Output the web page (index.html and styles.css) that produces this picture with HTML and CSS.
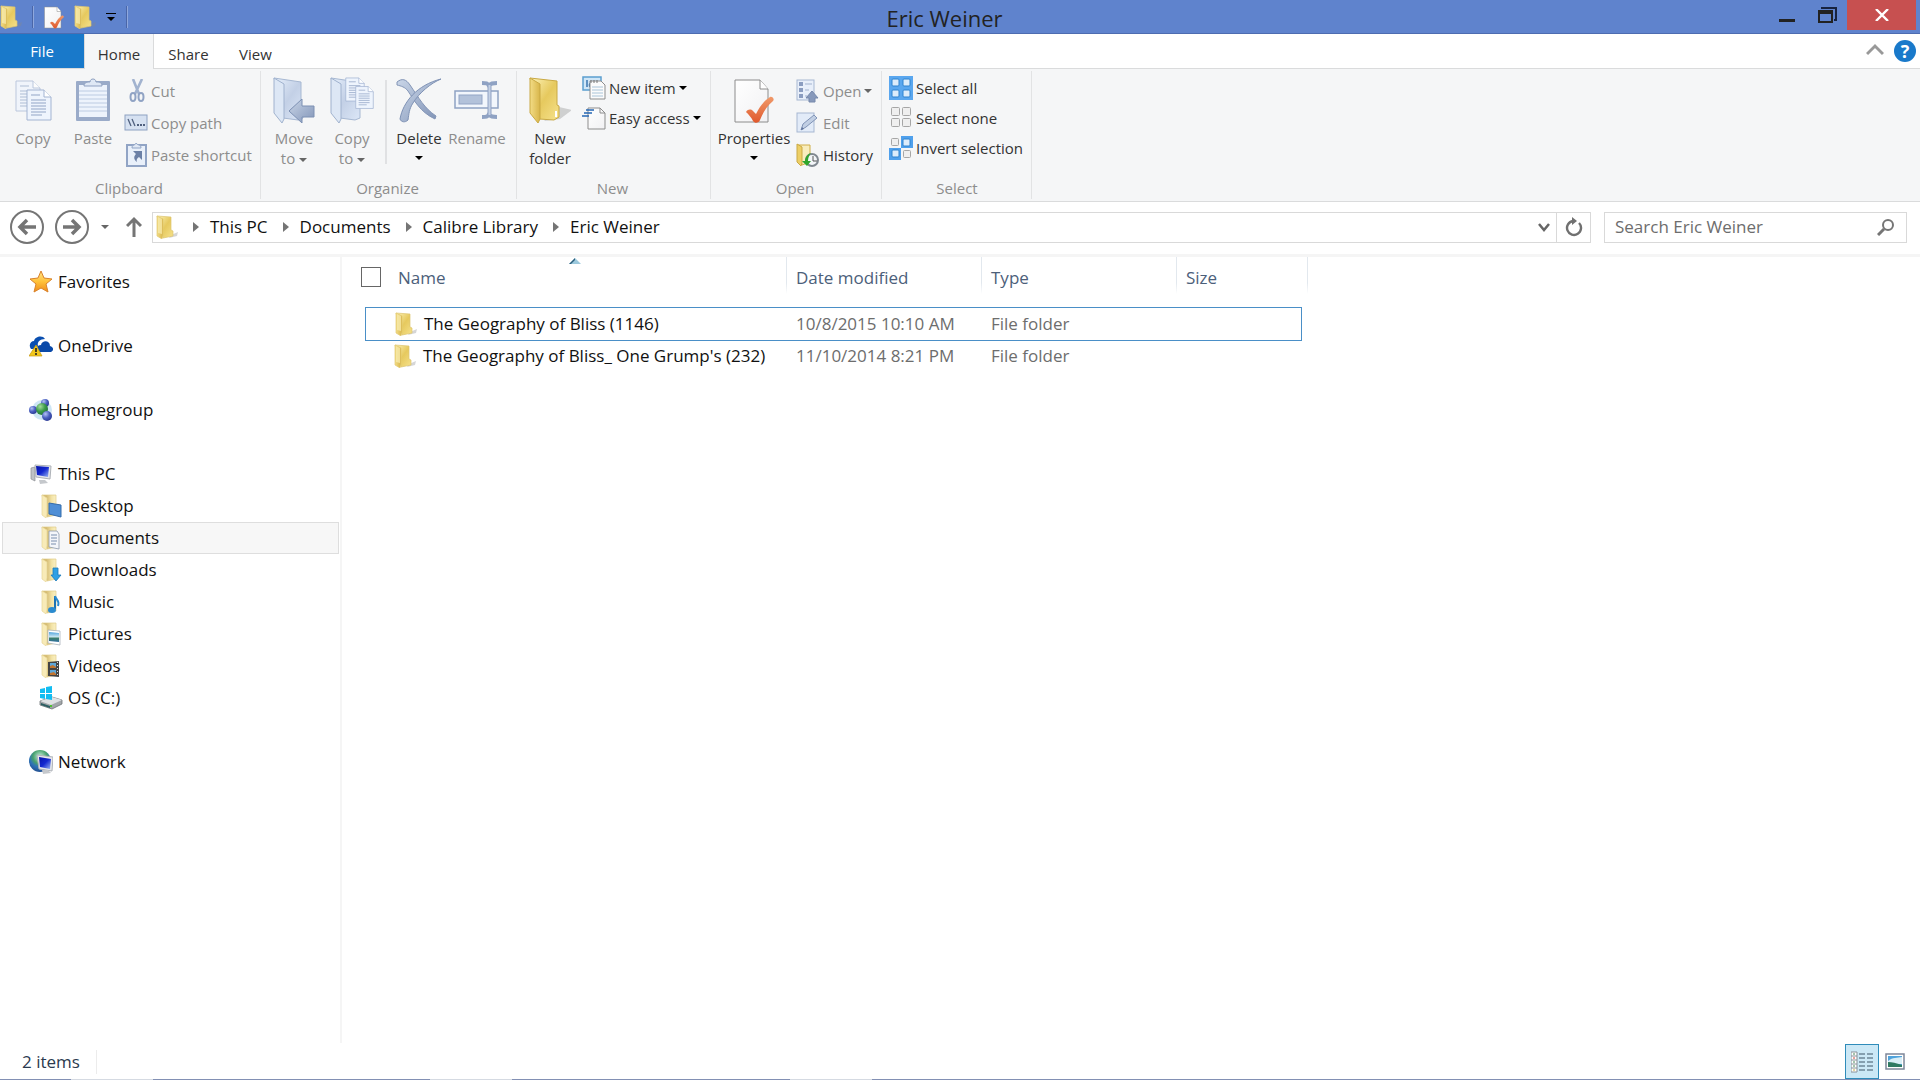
FILE: index.html
```
<!DOCTYPE html>
<html lang="en">
<head>
<meta charset="UTF-8">
<meta name="viewport" content="width=device-width, initial-scale=1.0">
<title>Eric Weiner</title>
<link rel="stylesheet" href="styles.css">
</head>
<body>
  <!-- shared icon shapes -->
  <svg class="defs" width="0" height="0" aria-hidden="true">
    <defs>
      <linearGradient id="gold" x1="0" x2="1" y1="0" y2="1">
        <stop offset="0" stop-color="#fdf3b8"/><stop offset="0.5" stop-color="#e6c95e"/><stop offset="1" stop-color="#f6e28c"/>
      </linearGradient>
      <linearGradient id="goldFlap" x1="0" x2="1">
        <stop offset="0" stop-color="#f3dc86"/><stop offset="1" stop-color="#d8b64a"/>
      </linearGradient>
      <linearGradient id="pale" x1="0" x2="1">
        <stop offset="0.3" stop-color="#d3b970"/><stop offset="0.7" stop-color="#f3e4a8"/><stop offset="1" stop-color="#faf0c4"/>
      </linearGradient>
      <linearGradient id="ice" x1="0" x2="1" y1="0" y2="1">
        <stop offset="0" stop-color="#e6effb"/><stop offset="0.5" stop-color="#c3d0e6"/><stop offset="1" stop-color="#dce7f7"/>
      </linearGradient>
      <linearGradient id="steel" x1="0" x2="1" y1="0" y2="1">
        <stop offset="0" stop-color="#cad6e8"/><stop offset="1" stop-color="#8295b8"/>
      </linearGradient>
      <linearGradient id="sheet" x1="0" x2="1" y1="0" y2="1">
        <stop offset="0" stop-color="#ffffff"/><stop offset="1" stop-color="#f1f1f3"/>
      </linearGradient>
      <linearGradient id="tick" x1="0" x2="0" y1="0" y2="1">
        <stop offset="0" stop-color="#f09a6a"/><stop offset="1" stop-color="#e0582c"/>
      </linearGradient>
      <linearGradient id="screen" x1="0" x2="1" y1="0" y2="1">
        <stop offset="0" stop-color="#0614a8"/><stop offset="0.5" stop-color="#1428d0"/><stop offset="1" stop-color="#9db8f2"/>
      </linearGradient>
      <linearGradient id="photo" x1="0" x2="0" y1="0" y2="1">
        <stop offset="0" stop-color="#4fa3dc"/><stop offset="0.5" stop-color="#cfe8f2"/><stop offset="0.6" stop-color="#3d7f68"/><stop offset="1" stop-color="#2f6fa3"/>
      </linearGradient>
      <radialGradient id="ballBlue" cx="0.35" cy="0.3" r="0.8">
        <stop offset="0" stop-color="#b4c3f4"/><stop offset="0.5" stop-color="#4a5fc0"/><stop offset="1" stop-color="#26348c"/>
      </radialGradient>
      <radialGradient id="ballGreen" cx="0.35" cy="0.3" r="0.8">
        <stop offset="0" stop-color="#a5dc9d"/><stop offset="0.5" stop-color="#3c9b4a"/><stop offset="1" stop-color="#1c6b34"/>
      </radialGradient>
      <radialGradient id="globe" cx="0.5" cy="0.3" r="0.8">
        <stop offset="0" stop-color="#c6f0dc"/><stop offset="0.4" stop-color="#47a06c"/><stop offset="0.6" stop-color="#2f73b8"/><stop offset="1" stop-color="#1d4180"/>
      </radialGradient>
      <linearGradient id="star" x1="0" x2="0" y1="0" y2="1">
        <stop offset="0" stop-color="#ffe48a"/><stop offset="0.5" stop-color="#ffc23a"/><stop offset="1" stop-color="#f08c1a"/>
      </linearGradient>

      <symbol id="i-folder" viewBox="0 0 22 24">
        <path d="M15 20l7-3-1 4-8 2z" fill="#8a8a8a" opacity="0.35"/>
        <path d="M1 1l14 1v13l2 1v5l-10 2z" fill="url(#gold)" stroke="#dcc470" stroke-width="0.7"/>
        <path d="M1 1l6 3v16l-1 4-5-3z" fill="url(#goldFlap)" stroke="#e2ca74" stroke-width="0.7"/>
        <path d="M2 2l4 2v15l-4-1z" fill="#faeeb4" opacity="0.7"/>
      </symbol>
      <symbol id="i-folder-pale" viewBox="0 0 22 24">
        <path d="M1 1h14v20l-9 2z" fill="url(#pale)" stroke="#dfcc88" stroke-width="0.7"/>
        <path d="M1 1l5 3v16l-1 4-4-3z" fill="#f8ebb8" stroke="#e6d596" stroke-width="0.7"/>
      </symbol>
      <symbol id="i-openfolder" viewBox="0 0 44 46">
        <path d="M30 30l13 3-12 9-16 2z" fill="#777" opacity="0.3"/>
        <path d="M1 1l27 3v24l2 1v11l-5 3-15-1z" fill="url(#gold)" stroke="#c9a944"/>
        <path d="M1 1l10 6v35l-2 4-8-10z" fill="url(#goldFlap)" stroke="#c9a944"/>
        <path d="M27 34v6" stroke="#fff" stroke-width="2"/>
      </symbol>
      <symbol id="i-icefolder" viewBox="0 0 44 46">
        <path d="M1 1l27 4v24l2 1v11l-5 2-15-2z" fill="url(#ice)" stroke="#a7b8d2"/>
        <path d="M1 1l10 6v35l-2 4-8-10z" fill="#dde7f5" stroke="#a0b2ce"/>
      </symbol>
      <symbol id="i-page" viewBox="0 0 26 32">
        <path d="M1 1h17l7 7v23h-24z" fill="#eef4fd" stroke="#a3b4d2"/>
        <path d="M18 1v7h7" fill="#fff" stroke="#a3b4d2"/>
        <path d="M5 6h9M5 11h15M5 14h15M5 17h15M5 20h15M5 23h15M5 26h11" stroke="#92a5c6" stroke-width="1"/>
      </symbol>
      <symbol id="i-checkpage" viewBox="0 0 40 46">
        <path d="M1 3h25l8 9v33h-33z" fill="url(#sheet)" stroke="#8c8c8c"/>
        <path d="M26 3v9h8" fill="#fff" stroke="#8c8c8c"/>
        <path d="M12 35c2-3 5-3 7-1l3 3c4-8 9-14 14-17 2-1 5 2 3 4-7 6-10 12-13 19-1 3-5 4-7 1-2-4-4-6-7-9z" fill="url(#tick)"/>
      </symbol>
    </defs>
  </svg>

  <header class="titlebar">
    <div class="quick">
      <svg width="22" height="24"><use href="#i-folder"/></svg>
      <span class="bar"></span>
      <button aria-label="Properties"><svg width="20" height="24"><use href="#i-checkpage"/></svg></button>
      <button aria-label="New folder"><svg width="22" height="24"><use href="#i-folder"/></svg></button>
      <button aria-label="Customize Quick Access Toolbar"><svg width="10" height="10" viewBox="0 0 10 10"><path d="M0 1h10v1h-10zM1 5h8l-4 4z" fill="#000"/></svg></button>
      <span class="bar"></span>
    </div>
    <h1>Eric Weiner</h1>
    <div class="controls">
      <button aria-label="Minimize"><svg width="16" height="18" viewBox="0 0 16 18"><path d="M0 13h16v3h-16z" fill="#222"/></svg></button>
      <button aria-label="Restore"><svg width="19" height="17" viewBox="0 0 19 17"><path d="M3 1h15v12h-2" fill="none" stroke="#17233f" stroke-width="2"/><path d="M1 4h13v11h-13z" fill="none" stroke="#222" stroke-width="2"/><path d="M0 3h15v4h-15z" fill="#222"/></svg></button>
      <button class="close" aria-label="Close"><svg width="14" height="12" viewBox="0 0 14 12"><path d="M1 0l12 12M13 0l-12 12" stroke="#fff" stroke-width="2.4"/></svg></button>
    </div>
  </header>

  <nav class="tabs">
    <button class="file">File</button>
    <button class="active">Home</button>
    <button>Share</button>
    <button>View</button>
    <div class="tabs-right">
      <button aria-label="Minimize the Ribbon"><svg width="18" height="14" viewBox="0 0 18 14"><path d="M1 11l8-8 8 8" fill="none" stroke="#999" stroke-width="3"/></svg></button>
      <button class="help" aria-label="Help">?</button>
    </div>
  </nav>

  <section class="ribbon">
    <div class="group clipboard">
      <div class="items">
        <button class="big off"><svg width="38" height="46" viewBox="0 0 38 46"><g transform="translate(1,3)"><use href="#i-page" width="26" height="32" opacity="0.7"/><use href="#i-page" x="11" y="9" width="26" height="32"/></g></svg>Copy</button>
        <button class="big off"><svg width="36" height="46" viewBox="0 0 36 46"><rect x="1" y="4" width="34" height="40" rx="1" fill="#9aabc9"/><rect x="4" y="8" width="28" height="32" fill="#edf3fc"/><path d="M4 14h28M4 18h28M4 22h28M4 26h28M4 30h28M4 34h28" stroke="#bccbe2"/><path d="M9 9c0-4 4-4 6-4 0-4 6-4 6 0 3 0 6 0 6 4z" fill="#dfe8f5" stroke="#8fa1c1"/></svg>Paste</button>
        <div class="stack">
          <button class="off"><svg width="24" height="24" viewBox="0 0 24 24"><path d="M9 0l6 15M18 0l-7 15" stroke="#a2b3cf" stroke-width="2.6"/><ellipse cx="9" cy="18" rx="2.500" ry="4" fill="none" stroke="#90a3c4" stroke-width="2"/><ellipse cx="17" cy="18" rx="2.500" ry="4" fill="none" stroke="#90a3c4" stroke-width="2"/></svg>Cut</button>
          <button class="off"><svg width="24" height="24" viewBox="0 0 24 24"><rect x="1" y="4" width="22" height="15" fill="#d6e1f1" stroke="#8ea1c2"/><path d="M4 8l3 7M8 8l3 7" stroke="#50607e" stroke-width="1.3"/><path d="M13 14h2M16 14h2M19 14h2" stroke="#50607e" stroke-width="2"/></svg>Copy path</button>
          <button class="off"><svg width="24" height="24" viewBox="0 0 24 24"><rect x="3" y="2" width="19" height="21" fill="#e9f0fa" stroke="#91a4c5" stroke-width="2"/><path d="M8 5c0-4 3-2 4-5 2 3 5 1 5 5z" fill="#e0e8f4" stroke="#91a4c5"/><path d="M9 8h9v9l-3-3c-2 1-3 3-2 5-4-3-3-6-1-8z" fill="#6b80a6"/></svg>Paste shortcut</button>
        </div>
      </div>
      <div class="caption">Clipboard</div>
    </div>

    <div class="group organize">
      <div class="items">
        <button class="big off"><svg width="42" height="46" viewBox="0 0 42 46"><use href="#i-icefolder" width="44" height="46"/><path d="M16 34l13-12v7h12v11h-12v6z" fill="url(#steel)" stroke="#7d90b3"/></svg>Move<br>to <i class="caret"></i></button>
        <button class="big off"><svg width="44" height="46" viewBox="0 0 44 46"><use href="#i-icefolder" width="44" height="46"/><use href="#i-page" x="15" y="0" width="20" height="25"/><use href="#i-page" x="25" y="8" width="19" height="25"/></svg>Copy<br>to <i class="caret"></i></button>
        <span class="divider"></span>
        <button class="big"><svg width="48" height="46" viewBox="0 0 48 46"><path d="M2 5c5-4 9-3 13 3 9 13 14 23 26 31l-1 3c-15-7-21-19-27-28-3-4-7-5-11-6z" fill="url(#steel)" stroke="#8496b7"/><path d="M46 2c-10 4-22 14-28 24-4 6-4 11-5 17-3 3-7 2-8-1 3-17 17-34 41-40z" fill="url(#steel)" stroke="#7f92b5"/></svg>Delete<i class="caret below"></i></button>
        <button class="big off"><svg width="46" height="46" viewBox="0 0 46 46"><rect x="1" y="14" width="43" height="17" fill="#f2f6fc" stroke="#8fa2c3" stroke-width="1.5"/><rect x="5" y="18" width="23" height="9" fill="#b3c2da" stroke="#93a5c5"/><path d="M28 6c4 0 6 0 7 3 1-3 4-3 8-3M28 40c4 0 6 0 7-3 1 3 4 3 8 3M35.500 9v28" fill="none" stroke="#8fa2c3" stroke-width="4"/><path d="M35.500 8v30" stroke="#c4d1e5" stroke-width="2"/></svg>Rename</button>
      </div>
      <div class="caption">Organize</div>
    </div>

    <div class="group new">
      <div class="items">
        <button class="big"><svg width="42" height="46" viewBox="0 0 42 46"><use href="#i-openfolder" width="44" height="46"/></svg>New<br>folder</button>
        <div class="stack tight">
          <button><svg width="24" height="24" viewBox="0 0 24 24"><rect x="1" y="1" width="18" height="13" fill="#cfe6f7" stroke="#5b9fd0" stroke-width="1.500"/><path d="M5 4v7M8 11c-2-4 3-6 4-3" stroke="#3a76b0" fill="none" stroke-width="1.500"/><path d="M8 5h11l4 4v14h-15z" fill="#fbfbfb" stroke="#8d8d8d"/><path d="M10 11h11M10 14h11M10 17h11M10 20h11" stroke="#a9c4d8"/><path d="M9 4v3M12 4v3M15 4v3" stroke="#777"/></svg>New item <i class="caret"></i></button>
          <button><svg width="24" height="24" viewBox="0 0 24 24"><path d="M6 2h12l5 5v16h-17z" fill="url(#sheet)" stroke="#8d8d8d"/><path d="M18 2v5h5" fill="none" stroke="#8d8d8d"/><path d="M4 4h8M2 7h8M0 10h7" stroke="#2667b4" stroke-width="1.500"/></svg>Easy access <i class="caret"></i></button>
        </div>
      </div>
      <div class="caption">New</div>
    </div>

    <div class="group open">
      <div class="items">
        <button class="big"><svg width="40" height="46"><use href="#i-checkpage"/></svg>Properties<i class="caret below"></i></button>
        <div class="stack">
          <button class="off"><svg width="24" height="24" viewBox="0 0 24 24"><rect x="1" y="1" width="17" height="20" fill="#e8effa" stroke="#a7b7d2"/><path d="M3 3h4v4h-4zM3 9h4v4h-4zM3 15h4v4h-4z" fill="#8b9dc0"/><path d="M9 5h7M9 11h4M9 17h2" stroke="#a3b3cf"/><path d="M10 19l6-7 6 7h-3v4h-6v-4z" fill="#8799bb" stroke="#7688ab"/></svg>Open <i class="caret"></i></button>
          <button class="off"><svg width="24" height="24" viewBox="0 0 24 24"><rect x="1" y="2" width="17" height="19" fill="#e2ebf8" stroke="#a7b7d2"/><path d="M5 19l2-6 11-9 3 3-11 9z" fill="#c1cfe4" stroke="#8093b6"/><path d="M5 19l3-1-2-2z" fill="#60749c"/></svg>Edit</button>
          <button><svg width="24" height="24" viewBox="0 0 24 24"><path d="M2 2h12v17l-8 3z" fill="#f8edbd" stroke="#d0ae46"/><path d="M1 1l5 3v16l-1 3-4-4z" fill="#edcf66" stroke="#c9a944"/><circle cx="16" cy="17" r="6" fill="#f2f5f8" stroke="#808890" stroke-width="2"/><path d="M17 13v5h4" fill="none" stroke="#555"/><path d="M15 10c-3 1-6 4-6 8h-3l5 5 4-5h-3c0-3 1-6 3-8z" fill="#2fa52c"/></svg>History</button>
        </div>
      </div>
      <div class="caption">Open</div>
    </div>

    <div class="group select">
      <div class="items">
        <div class="stack tight">
          <button><svg width="24" height="24" viewBox="0 0 24 24"><rect width="24" height="24" fill="#5aa7ef"/><g fill="#dcecfb" stroke="#2f83cf"><rect x="3" y="3" width="7" height="7" rx="1"/><rect x="14" y="3" width="7" height="7" rx="1"/><rect x="3" y="14" width="7" height="7" rx="1"/><rect x="14" y="14" width="7" height="7" rx="1"/></g></svg>Select all</button>
          <button><svg width="24" height="24" viewBox="0 0 24 24"><g fill="#efefef" stroke="#a6a6a6"><rect x="2.500" y="1.500" width="8" height="8" rx="1"/><rect x="13.500" y="1.500" width="8" height="8" rx="1"/><rect x="2.500" y="12.500" width="8" height="8" rx="1"/><rect x="13.500" y="12.500" width="8" height="8" rx="1"/></g></svg>Select none</button>
          <button><svg width="24" height="24" viewBox="0 0 24 24"><path d="M12 0h12v12h-12zM0 12h12v12h-12z" fill="#4fa0ec"/><g fill="#dcecfb" stroke="#2f83cf"><rect x="14" y="3" width="7" height="7" rx="1"/><rect x="3" y="14" width="7" height="7" rx="1"/></g><g fill="#efefef" stroke="#a6a6a6"><rect x="2.500" y="2.500" width="7" height="7" rx="1"/><rect x="14.500" y="14.500" width="7" height="7" rx="1"/></g></svg>Invert selection</button>
        </div>
      </div>
      <div class="caption">Select</div>
    </div>
  </section>

  <div class="address-row">
    <button aria-label="Back"><svg width="34" height="34" viewBox="0 0 34 34"><circle cx="17" cy="17" r="16" fill="none" stroke="#757575" stroke-width="2"/><path d="M26 17h-16M17 10l-7 7 7 7" fill="none" stroke="#757575" stroke-width="3.500"/></svg></button>
    <button aria-label="Forward"><svg width="34" height="34" viewBox="0 0 34 34"><circle cx="17" cy="17" r="16" fill="none" stroke="#757575" stroke-width="2"/><path d="M8 17h16M17 10l7 7-7 7" fill="none" stroke="#757575" stroke-width="3.500"/></svg></button>
    <button class="recent" aria-label="Recent locations"><i class="caret"></i></button>
    <button aria-label="Up"><svg width="16" height="22" viewBox="0 0 16 22"><path d="M8 21v-18M1 10l7-7 7 7" fill="none" stroke="#757575" stroke-width="3"/></svg></button>
    <div class="address">
      <svg width="22" height="24"><use href="#i-folder"/></svg>
      <i class="sep"></i><a href="#">This PC</a>
      <i class="sep"></i><a href="#">Documents</a>
      <i class="sep"></i><a href="#">Calibre Library</a>
      <i class="sep"></i><a href="#">Eric Weiner</a>
      <button class="drop" aria-label="Previous locations"><svg width="14" height="10" viewBox="0 0 14 10"><path d="M2 1l5 6 5-6" fill="none" stroke="#666" stroke-width="2.500"/></svg></button>
      <button class="refresh" aria-label="Refresh"><svg width="18" height="20" viewBox="0 0 18 20"><path d="M14 6a7 7 0 1 1-6-2" fill="none" stroke="#707070" stroke-width="2.400"/><path d="M7 0l5 4-5 4z" fill="#707070"/></svg></button>
    </div>
    <label class="search">
      <input type="search" placeholder="Search Eric Weiner" aria-label="Search Eric Weiner">
      <svg width="18" height="18" viewBox="0 0 18 18"><circle cx="11" cy="7" r="5" fill="none" stroke="#757575" stroke-width="2"/><path d="M7 11l-6 6" stroke="#757575" stroke-width="3"/></svg>
    </label>
  </div>

  <main>
    <nav class="tree">
      <a href="#" class="root"><svg width="24" height="24" viewBox="0 0 24 24"><path d="M12 1l3 7 8 1-6 5 2 8-7-4-7 4 2-8-6-5 8-1z" fill="url(#star)" stroke="#d9822b"/></svg>Favorites</a>
      <a href="#" class="root"><svg width="24" height="24" viewBox="0 0 24 24"><path d="M2 15c-3-4 0-8 3-8 1-5 9-6 11-2-6 0-8 4-7 7l-2 3z" fill="#0a4fb0"/><path d="M9 17c-2-5 1-6 3-6 1-5 9-5 9 1 4 1 4 5 1 6h-11z" fill="#0a49a8"/><path d="M7 11l6 11h-13z" fill="#f2c71c" stroke="#c79a12" stroke-width="0.700"/><path d="M7 14v4M7 19v2" stroke="#222" stroke-width="1.600"/></svg>OneDrive</a>
      <a href="#" class="root"><svg width="24" height="24" viewBox="0 0 24 24"><circle cx="13" cy="12" r="10" fill="#c3e0f2" opacity="0.800"/><circle cx="16" cy="5" r="4" fill="url(#ballBlue)"/><circle cx="4" cy="12" r="4" fill="url(#ballBlue)"/><circle cx="13" cy="11" r="6" fill="url(#ballGreen)"/><circle cx="18" cy="18" r="5" fill="url(#ballBlue)"/></svg>Homegroup</a>
      <a href="#" class="root"><svg width="24" height="24" viewBox="0 0 24 24"><path d="M2 6l4-1v14l-4-2z" fill="#bfc2c6" stroke="#8c8f93" stroke-width="0.700"/><path d="M6 3l16 1-1 13-14-2z" fill="#e5e7ea" stroke="#aeb2b8"/><path d="M7 4l13 1-1 10-11-2z" fill="url(#screen)"/><path d="M10 18h6l3 3-8 1z" fill="#c5c8cc"/></svg>This PC</a>
      <ul>
        <li><a href="#"><svg width="22" height="24" viewBox="0 0 22 24"><use href="#i-folder-pale"/><path d="M8 9l12 2v12l-12-3z" fill="#4f8fd6" stroke="#356cab"/></svg>Desktop</a></li>
        <li><a href="#" class="current"><svg width="22" height="24" viewBox="0 0 22 24"><use href="#i-folder-pale"/><path d="M8 5l8 0 2 3v15l-10-2z" fill="#f4f6fa" stroke="#8d99ab" stroke-width="0.800"/><path d="M10 9h6M10 12h6M10 15h6M10 18h5" stroke="#7b8fae"/></svg>Documents</a></li>
        <li><a href="#"><svg width="22" height="24" viewBox="0 0 22 24"><use href="#i-folder-pale"/><path d="M12 10h5v7h3l-5 6-5-6h2z" fill="#2fa0e4" stroke="#1b79b9" stroke-width="0.800"/></svg>Downloads</a></li>
        <li><a href="#"><svg width="22" height="24" viewBox="0 0 22 24"><use href="#i-folder-pale"/><path d="M14 6v13" stroke="#1d73b4" stroke-width="2"/><ellipse cx="11" cy="20" rx="4" ry="3" fill="#2a8bd0"/><path d="M14 6c1 4 5 4 3 10" stroke="#2a8bd0" stroke-width="2" fill="none"/></svg>Music</a></li>
        <li><a href="#"><svg width="22" height="24" viewBox="0 0 22 24"><use href="#i-folder-pale"/><path d="M7 8l12 1v14l-12-2z" fill="#fff" stroke="#a9b2bb" stroke-width="0.800"/><path d="M8 10l10 1v9l-10-1z" fill="url(#photo)"/></svg>Pictures</a></li>
        <li><a href="#"><svg width="22" height="24" viewBox="0 0 22 24"><use href="#i-folder-pale"/><path d="M7 8l11-1v16l-11-1z" fill="#444"/><path d="M9 9h6v5h-6zM9 16h6v5h-6z" fill="#5fa6d6"/><path d="M9 12l3-1 3 2v1h-6zM9 19l4-1 2 2v1h-6z" fill="#c2752f"/><path d="M16.500 8v14" stroke="#ddd" stroke-dasharray="1 2"/></svg>Videos</a></li>
        <li><a href="#" class="drive"><svg width="24" height="24" viewBox="0 0 24 24"><path d="M1 15l12-4 10 3v4l-10 5-12-4z" fill="#a2a6a9" stroke="#6f7376" stroke-width="0.800"/><path d="M1 15l12-4 10 3-11 5z" fill="#e0e2e4"/><path d="M2 17l9 3v2l-9-3z" fill="#2c5f62"/><path d="M1 3l5-1v5h-5zM7 1l6-1v7h-6zM1 8h5v5l-5-1zM7 8h6v6l-6-1z" fill="#12bdf2"/><path d="M12 19v2" stroke="#4ec12f" stroke-width="2"/></svg>OS (C:)</a></li>
      </ul>
      <a href="#" class="root"><svg width="24" height="24" viewBox="0 0 24 24"><circle cx="11" cy="11" r="11" fill="url(#globe)"/><path d="M8 5l16 2-1 14-13-2z" fill="#e5e7ea" stroke="#aeb2b8"/><path d="M10 7l12 2-1 10-10-2z" fill="url(#screen)"/><path d="M13 20h6l3 3-8 1z" fill="#c5c8cc"/></svg>Network</a>
    </nav>

    <section class="files">
      <table>
        <colgroup><col class="c-edge"><col class="c-name"><col class="c-date"><col class="c-type"><col class="c-size"><col class="c-end"></colgroup>
        <thead>
          <tr>
            <th colspan="2" class="name"><div><input type="checkbox" id="all" aria-label="Select all items"><label for="all">Name</label></div><svg class="sort" width="12" height="6" viewBox="0 0 12 6"><path d="M0 6l6-6 6 6z" fill="#9cc9dd"/><path d="M0 6l6-6v2l-4 4z" fill="#2d5f7c"/></svg></th>
            <th>Date modified</th>
            <th>Type</th>
            <th colspan="2">Size</th>
          </tr>
        </thead>
        <tbody>
          <tr class="focused">
            <td></td>
            <td><div class="filename"><svg width="22" height="24"><use href="#i-folder"/></svg>The Geography of Bliss (1146)</div></td>
            <td>10/8/2015 10:10 AM</td>
            <td>File folder</td>
            <td></td>
            <td></td>
          </tr>
          <tr>
            <td></td>
            <td><div class="filename"><svg width="22" height="24"><use href="#i-folder"/></svg>The Geography of Bliss_ One Grump's (232)</div></td>
            <td>11/10/2014 8:21 PM</td>
            <td>File folder</td>
            <td></td>
            <td></td>
          </tr>
        </tbody>
      </table>
    </section>
  </main>

  <footer>
    <span class="count">2 items</span>
    <div class="views">
      <button class="on" aria-label="Details"><svg width="22" height="22" viewBox="0 0 22 22"><path d="M0 1h6v20h-6z" fill="#fff" stroke="#8a9299"/><path d="M0 5h6M0 9h6M0 13h6M0 17h6" stroke="#8a9299"/><path d="M2 7h2" stroke="#d0453a"/><path d="M2 3h2M2 11h2M2 15h2" stroke="#4a8a5a"/><path d="M2 19h2" stroke="#c9a944"/><path d="M8 3h6M16 3h6M8 7h6M16 7h6M8 11h6M16 11h6M8 15h6M16 15h6M8 19h6M16 19h6" stroke="#3e5669"/></svg></button>
      <button aria-label="Large icons"><svg width="20" height="17" viewBox="0 0 20 17"><rect x="1" y="1" width="18" height="15" fill="#fff" stroke="#7d8799" stroke-width="1.500"/><path d="M3 3h14v11h-14z" fill="#4fa3dc"/><path d="M3 8c5-4 9-3 14-4v7h-14z" fill="#d9eef6"/><path d="M3 9c4 0 8 1 14 3v2h-14z" fill="#2f7a62"/></svg></button>
    </div>
  </footer>
  <div class="taskbar-edge"><span></span><span></span><span></span></div>
</body>
</html>
```
FILE: styles.css
```
* {
  box-sizing: border-box;
}
body {
  margin: 0;
  min-height: 100vh;
  display: flex;
  flex-direction: column;
  background: #fff;
  color: #111;
  font-family: "Open Sans", "Noto Sans", sans-serif;
  font-size: 17px;
  line-height: 24px;
}
button {
  padding: 0;
  border: none;
  background: none;
  color: inherit;
  font: inherit;
}
a {
  color: inherit;
  text-decoration: none;
}
svg {
  flex: none;
}
.defs {
  position: absolute;
}

/* small triangles beside menu buttons */
.caret {
  display: inline-block;
  border: 4px solid transparent;
  border-top-color: #000;
  border-bottom: none;
  vertical-align: middle;
}
.off .caret,
.recent .caret {
  border-top-color: #666;
}

/* title bar */
.titlebar {
  display: flex;
  height: 34px;
  background: #5f83cd;
  border-bottom: 1px solid #4d6cb0;
}
.quick {
  display: flex;
  align-items: center;
  gap: 10px;
  width: 130px;
}
.quick button {
  display: flex;
}
.quick .bar {
  width: 2px;
  height: 22px;
  background: #8fa8dd;
  border-left: 1px solid #4a66a8;
}
.titlebar h1 {
  flex: 1;
  margin: 0 8px 0 0;
  text-align: center;
  font-size: 22px;
  font-weight: normal;
  line-height: 36px;
  color: #222;
}
.controls {
  display: flex;
  align-items: flex-start;
  padding-right: 4px;
}
.controls button {
  display: flex;
  align-items: center;
  justify-content: center;
  width: 40px;
  height: 30px;
}
.controls .close {
  width: 69px;
  background: #c75050;
}

/* ribbon tabs */
.tabs {
  display: flex;
  height: 35px;
  border-bottom: 1px solid #dadbdc;
  font-size: 15px;
  color: #333;
}
.tabs > button {
  width: 67px;
  padding: 6px 0 0 2px;
}
.tabs .file {
  width: 84px;
  padding: 0;
  background: #1979ca;
  color: #fff;
}
.tabs .active {
  width: 70px;
  height: 35px;
  padding: 5px 0 0;
  background: #f5f6f7;
  border: 1px solid #dadbdc;
  border-width: 0 1px;
}
.tabs-right {
  display: flex;
  align-items: center;
  gap: 10px;
  margin-left: auto;
  padding-right: 4px;
}
.help {
  width: 22px;
  height: 22px;
  border-radius: 50%;
  background: #1979ca;
  color: #fff;
  font-size: 18px;
  font-weight: bold;
  line-height: 22px;
}

/* ribbon */
.ribbon {
  display: flex;
  height: 133px;
  padding: 2px 0;
  background: #f5f6f7;
  border-bottom: 1px solid #dadbdc;
  font-size: 15px;
  line-height: 20px;
  color: #333;
}
.group {
  display: flex;
  flex-direction: column;
  padding-left: 4px;
  border-right: 1px solid #e2e3e4;
}
.clipboard {
  width: 261px;
}
.organize {
  width: 256px;
}
.new {
  width: 194px;
}
.open {
  width: 171px;
}
.select {
  width: 150px;
  padding-left: 7px;
}
.items {
  display: flex;
  flex: 1;
  gap: 2px;
}
.organize .items {
  gap: 0;
}
.new .items,
.open .items {
  gap: 3px;
}
.caption {
  padding: 0 6px 1px 0;
  text-align: center;
  color: #8d8d8d;
}
.off {
  color: #8d8d8d;
}
.big {
  width: 58px;
  padding-top: 6px;
  display: block;
  text-align: center;
  align-self: flex-start;
  white-space: nowrap;
}
.big svg {
  display: block;
  height: 46px;
  margin: 0 auto 5px;
}
.open .big {
  width: 78px;
}
.below {
  display: block;
  width: 8px;
  margin: 8px auto 0;
}
.divider {
  width: 2px;
  height: 84px;
  margin: 9px 3px 0 4px;
  background: #e0e1e3;
}
.stack {
  padding-top: 4px;
}
.stack.tight {
  padding-top: 2px;
}
.stack button {
  display: flex;
  align-items: center;
  gap: 3px;
  height: 32px;
  white-space: nowrap;
}
.stack.tight button {
  height: 30px;
}

/* address row */
.address-row {
  display: flex;
  align-items: center;
  height: 52px;
  padding: 0 13px 2px 10px;
  gap: 11px;
}
.address-row > button {
  display: flex;
}
.address-row .recent {
  margin: 0 6px 0 1px;
}
.address {
  display: flex;
  align-items: center;
  flex: 1;
  height: 31px;
  margin: 0 2px 0 -1px;
  padding-left: 3px;
  border: 1px solid #d9d9d9;
}
.sep {
  margin: 0 11px 0 15px;
  border: 5px solid transparent;
  border-left: 6px solid #757575;
  border-right: none;
}
.drop {
  margin-left: auto;
  padding: 0 5px;
}
.refresh {
  display: flex;
  align-items: center;
  justify-content: center;
  align-self: stretch;
  width: 34px;
  border-left: 1px solid #d9d9d9;
}
.search {
  display: flex;
  align-items: center;
  width: 303px;
  height: 31px;
  padding: 0 11px 0 10px;
  border: 1px solid #d9d9d9;
}
.search input {
  flex: 1;
  min-width: 0;
  padding: 0;
  border: none;
  outline: none;
  background: none;
  font: inherit;
}
.search input::placeholder {
  color: #6d6d6d;
  opacity: 1;
}

/* folder tree and file list */
main {
  display: flex;
  flex: 1;
  border-top: 3px solid #f5f5f5;
}
.tree {
  width: 342px;
  padding: 9px 1px 0 2px;
  border-right: 2px solid #f5f5f5;
}
.tree a {
  display: flex;
  align-items: center;
  gap: 5px;
  height: 32px;
}
.tree .root {
  margin-bottom: 32px;
  padding-left: 27px;
}
.tree .root:has(+ ul) {
  margin-bottom: 0;
}
.tree ul {
  margin: 0 0 32px;
  padding: 0;
  list-style: none;
}
.tree li a {
  padding-left: 38px;
  border: 1px solid transparent;
}
.tree li .drive {
  padding-left: 36px;
}
.tree li .current {
  background: #f7f7f7;
  border-color: #dedede;
}
.files {
  flex: 1;
}
table {
  width: 966px;
  table-layout: fixed;
  border-spacing: 0;
}
.c-edge { width: 23px; }
.c-name { width: 422px; }
.c-date { width: 195px; }
.c-type { width: 195px; }
.c-size { width: 125px; }
.c-end { width: 6px; }
th, td {
  padding: 0 0 0 9px;
  text-align: left;
  font-weight: normal;
  white-space: nowrap;
}
th {
  position: relative;
  height: 50px;
  padding-top: 9px;
  vertical-align: top;
  color: #4c607a;
  background: linear-gradient(#e2e8ee 70%, #fff) right top / 1px 37px no-repeat;
}
th.name {
  padding-left: 19px;
}
th.name div {
  display: flex;
  align-items: flex-start;
  gap: 17px;
}
th input {
  appearance: none;
  width: 20px;
  height: 20px;
  margin: 1px 0 0;
  border: 1px solid #666;
}
.sort {
  position: absolute;
  top: 1px;
  left: 51%;
}
td {
  height: 30px;
  color: #6d6d6d;
}
.filename {
  display: flex;
  align-items: center;
  gap: 7px;
  padding-left: 20px;
  color: #111;
}
.focused td {
  height: 34px;
  border: 0 solid #4a8fc7;
}
.focused td:not(:first-child):not(:last-child) {
  border-width: 1px 0;
}
.focused td:nth-child(2) {
  border-left-width: 1px !important;
}
.focused td:nth-child(5) {
  border-right-width: 1px !important;
}

/* status bar */
footer {
  display: flex;
  align-items: center;
  height: 36px;
  padding: 1px 9px 0 22px;
  color: #2b3a4f;
}
.count {
  padding-right: 16px;
  border-right: 1px solid #ececec;
}
.views {
  display: flex;
  margin-left: auto;
}
.views button {
  display: flex;
  align-items: center;
  justify-content: center;
  width: 32px;
  height: 35px;
}
.views .on {
  width: 34px;
  background: #cbe8f6;
  border: 1px solid #2f8cba;
}
.taskbar-edge {
  display: flex;
  height: 1px;
  padding-left: 71px;
  background: #8290b4;
}
.taskbar-edge span {
  width: 82px;
  margin-right: 15%;
  background: #d5dae2;
}
```
